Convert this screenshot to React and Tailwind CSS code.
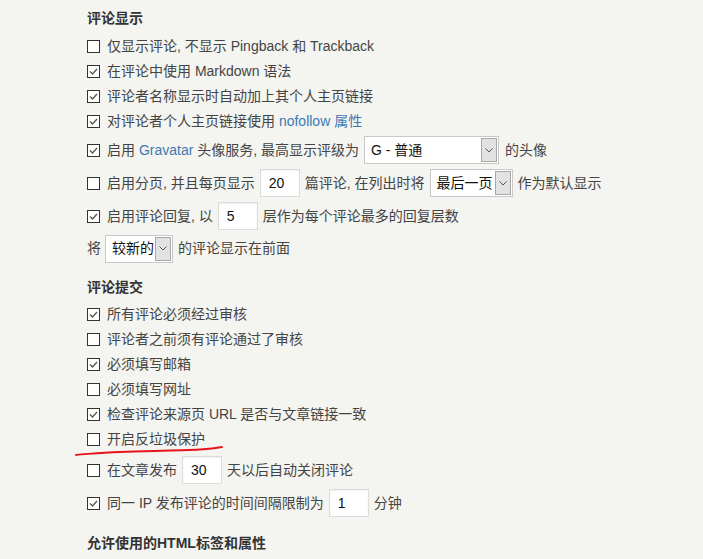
import React from "react";

const Box = ({ checked }) => (
  <span className="w-[13px] h-[13px] shrink-0 border border-[#333] bg-white flex items-center justify-center">
    {checked && (
      <svg width="11" height="11" viewBox="0 0 11 11">
        <path d="M2 5.5 L4.5 8 L9 3" fill="none" stroke="#555" strokeWidth="1.3" />
      </svg>
    )}
  </span>
);

const Row = ({ checked, children, className = "h-[25px]" }) => (
  <div className={`flex items-center ${className}`}>
    <Box checked={checked} />
    <div className="ml-[7px] flex items-center gap-[5px]">{children}</div>
  </div>
);

const Input = ({ value, w = "w-[40px]" }) => (
  <span className={`${w} h-[28px] bg-white border border-[#dcdcdc] shadow-[inset_0_1px_2px_rgba(0,0,0,0.07)] flex items-center pl-[8px] text-[#111]`}>
    {value}
  </span>
);

const Select = ({ value, w }) => (
  <span className={`${w} h-[28px] bg-white border border-[#c8c8c8] flex items-stretch p-[1px]`}>
    <span className="flex-1 flex items-center pl-[5px] text-[#111]">{value}</span>
    <span className="w-[16px] bg-[#e2e2e2] border border-[#a9a9a9] flex items-center justify-center">
      <svg width="8" height="5" viewBox="0 0 8 5">
        <path d="M0.5 0.5 L4 4 L7.5 0.5" fill="none" stroke="#555" strokeWidth="1" />
      </svg>
    </span>
  </span>
);

const Heading = ({ children, className = "" }) => (
  <h3 className={`h-[20px] leading-[20px] text-[14px] font-bold text-[#333] ${className}`}>{children}</h3>
);

export default function App() {
  return (
    <div
      className="min-h-screen bg-[#f4f4f0] pl-[87px] pt-[8px] text-[14px] text-[#444]"
      style={{ fontFamily: '"Liberation Sans", "Noto Sans CJK SC", sans-serif' }}
    >
      <Heading>评论显示</Heading>
      <div className="mt-[6px]">
        <Row>仅显示评论, 不显示 Pingback 和 Trackback</Row>
        <Row checked>在评论中使用 Markdown 语法</Row>
        <Row checked>评论者名称显示时自动加上其个人主页链接</Row>
        <Row checked>
          <span>
            对评论者个人主页链接使用 <span className="text-[#3d7ab0]">nofollow 属性</span>
          </span>
        </Row>
        <Row checked className="h-[28px] mt-[2px]">
          <span>
            启用 <span className="text-[#3d7ab0]">Gravatar</span> 头像服务, 最高显示评级为
          </span>
          <Select value="G - 普通" w="w-[135px]" />
          <span className="ml-[1px]">的头像</span>
        </Row>
        <Row className="h-[28px] mt-[5px]">
          <span>启用分页, 并且每页显示</span>
          <Input value="20" />
          <span>篇评论, 在列出时将</span>
          <Select value="最后一页" w="w-[83px]" />
          <span>作为默认显示</span>
        </Row>
        <Row checked className="h-[28px] mt-[5px]">
          <span>启用评论回复, 以</span>
          <Input value="5" />
          <span>层作为每个评论最多的回复层数</span>
        </Row>
        <div className="h-[27px] mt-[5px] flex items-center gap-[4px]">
          <span>将</span>
          <Select value="较新的" w="w-[68px]" />
          <span className="ml-[1px]">的评论显示在前面</span>
        </div>
      </div>

      <Heading className="mt-[15px]">评论提交</Heading>
      <div className="mt-[5px]">
        <Row checked>所有评论必须经过审核</Row>
        <Row>评论者之前须有评论通过了审核</Row>
        <Row checked>必须填写邮箱</Row>
        <Row>必须填写网址</Row>
        <Row checked>检查评论来源页 URL 是否与文章链接一致</Row>
        <div className="relative">
          <Row>开启反垃圾保护</Row>
          <svg
            className="absolute left-[-12px] top-[18px]"
            width="150"
            height="12"
            viewBox="0 0 150 12"
          >
            <path
              d="M1 10 C 15 9, 25 7.5, 45 7 C 75 6, 105 5.5, 125 4.5 C 135 4, 142 3, 147 2"
              fill="none"
              stroke="#e8141c"
              strokeWidth="1.8"
              strokeLinecap="round"
            />
          </svg>
        </div>
        <Row className="h-[28px] mt-[4px]">
          <span>在文章发布</span>
          <Input value="30" />
          <span>天以后自动关闭评论</span>
        </Row>
        <Row checked className="h-[28px] mt-[5px]">
          <span>同一 IP 发布评论的时间间隔限制为</span>
          <Input value="1" />
          <span>分钟</span>
        </Row>
      </div>

      <Heading className="mt-[16px]">允许使用的HTML标签和属性</Heading>
    </div>
  );
}
